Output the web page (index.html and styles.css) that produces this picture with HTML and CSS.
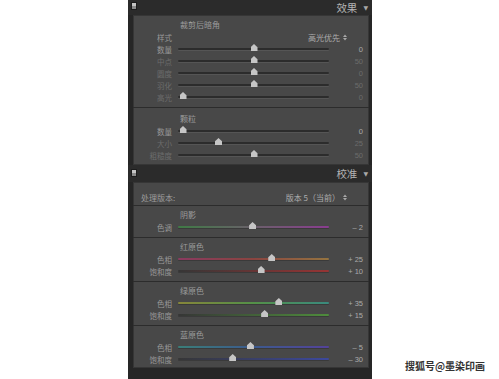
FILE: index.html
```html
<!DOCTYPE html>
<html lang="zh">
<head>
<meta charset="utf-8">
<link rel="stylesheet" href="styles.css">
</head>
<body>
<div class="panel">
  <div class="head head-top">
    <span class="toggle"></span>
    <span class="head-title">效果</span>
    <span class="caret">▼</span>
  </div>
  <div class="content content-a">
    <div class="section sec-vignette">
      <div class="title">裁剪后暗角</div>
      <div class="row">
        <span class="label">样式</span>
        <span class="select">高光优先 <svg class="updown" width="4" height="7" viewBox="0 0 4 7"><polygon points="0,3 2,0.5 4,3" fill="#a8a8a8"/><polygon points="0,4 4,4 2,6.5" fill="#a8a8a8"/></svg></span>
      </div>
      <div class="row">
        <span class="label">数量</span>
        <span class="track"><span class="thumb" style="--p:0.5"></span></span>
        <span class="value">0</span>
      </div>
      <div class="row dim">
        <span class="label">中点</span>
        <span class="track"><span class="thumb" style="--p:0.5"></span></span>
        <span class="value">50</span>
      </div>
      <div class="row dim">
        <span class="label">圆度</span>
        <span class="track"><span class="thumb" style="--p:0.5"></span></span>
        <span class="value">0</span>
      </div>
      <div class="row dim">
        <span class="label">羽化</span>
        <span class="track"><span class="thumb" style="--p:0.5"></span></span>
        <span class="value">50</span>
      </div>
      <div class="row dim">
        <span class="label">高光</span>
        <span class="track"><span class="thumb" style="--p:0"></span></span>
        <span class="value">0</span>
      </div>
    </div>
    <div class="section sec-grain">
      <div class="title">颗粒</div>
      <div class="row">
        <span class="label">数量</span>
        <span class="track"><span class="thumb" style="--p:0"></span></span>
        <span class="value">0</span>
      </div>
      <div class="row dim">
        <span class="label">大小</span>
        <span class="track"><span class="thumb" style="--p:0.25"></span></span>
        <span class="value">25</span>
      </div>
      <div class="row dim">
        <span class="label">粗糙度</span>
        <span class="track"><span class="thumb" style="--p:0.5"></span></span>
        <span class="value">50</span>
      </div>
    </div>
  </div>
  <div class="head head-cal">
    <span class="toggle"></span>
    <span class="head-title">校准</span>
    <span class="caret">▼</span>
  </div>
  <div class="content content-b">
    <div class="section sec-process">
      <div class="process-row">
        <span class="process-label">处理版本:</span>
        <span class="select">版本 5（当前） <svg class="updown" width="4" height="7" viewBox="0 0 4 7"><polygon points="0,3 2,0.5 4,3" fill="#a8a8a8"/><polygon points="0,4 4,4 2,6.5" fill="#a8a8a8"/></svg></span>
      </div>
    </div>
    <div class="section">
      <div class="title">阴影</div>
      <div class="row">
        <span class="label">色调</span>
        <span class="track color g-tint"><span class="thumb" style="--p:0.49"></span></span>
        <span class="value">– 2</span>
      </div>
    </div>
    <div class="section">
      <div class="title">红原色</div>
      <div class="row">
        <span class="label">色相</span>
        <span class="track color g-red-hue"><span class="thumb" style="--p:0.625"></span></span>
        <span class="value">+ 25</span>
      </div>
      <div class="row">
        <span class="label">饱和度</span>
        <span class="track color g-red-sat"><span class="thumb" style="--p:0.55"></span></span>
        <span class="value">+ 10</span>
      </div>
    </div>
    <div class="section">
      <div class="title">绿原色</div>
      <div class="row">
        <span class="label">色相</span>
        <span class="track color g-green-hue"><span class="thumb" style="--p:0.675"></span></span>
        <span class="value">+ 35</span>
      </div>
      <div class="row">
        <span class="label">饱和度</span>
        <span class="track color g-green-sat"><span class="thumb" style="--p:0.575"></span></span>
        <span class="value">+ 15</span>
      </div>
    </div>
    <div class="section sec-last">
      <div class="title">蓝原色</div>
      <div class="row">
        <span class="label">色相</span>
        <span class="track color g-blue-hue"><span class="thumb" style="--p:0.475"></span></span>
        <span class="value">– 5</span>
      </div>
      <div class="row">
        <span class="label">饱和度</span>
        <span class="track color g-blue-sat"><span class="thumb" style="--p:0.35"></span></span>
        <span class="value">– 30</span>
      </div>
    </div>
  </div>
</div>
<div class="watermark">搜狐号@墨染印画</div>
</body>
</html>
```

FILE: styles.css
```css
html, body {
  margin: 0;
  padding: 0;
  background: #ffffff;
}
body {
  width: 499px;
  height: 379px;
  overflow: hidden;
  position: relative;
  font-family: "Noto Sans CJK SC", "Liberation Sans", sans-serif;
}
.panel {
  margin-left: 128px;
  width: 244px;
  height: 379px;
  background: #262626;
  display: flex;
  flex-direction: column;
}
.head {
  display: flex;
  align-items: center;
  padding: 0 3px 0 3px;
  background: #2b2b2b;
}
.head-top { height: 15px; }
.head-cal { height: 17px; }
.toggle {
  width: 4px;
  height: 6px;
  background: linear-gradient(#c4c4c4 0 50%, #8a8a8a 50% 100%);
  border: 1px solid #1c1c1c;
  align-self: flex-start;
  margin-top: 2px;
}
.head-cal .toggle { margin-top: 4px; }
.head-title {
  margin-left: auto;
  color: #b4b4b4;
  font-size: 10.5px;
  line-height: 12px;
}
.caret {
  color: #a9a9a9;
  font-size: 6px;
  margin-left: 6px;
  margin-right: 1px;
  font-family: "DejaVu Sans", sans-serif;
}
.content {
  margin: 0 3px 0 5px;
  background: #484848;
  box-shadow: inset 1px 0 0 #363636, inset -1px 0 0 #363636, inset 0 1px 0 #363636, inset 0 -1px 0 #363636;
}
.content-a { height: 150px; }
.content-b { height: 186px; }
.section {
  padding: 3px 0 4px 0;
  border-bottom: 1px solid #2c2c2c;
}
.sec-vignette { padding: 4px 0 4px 0; }
.sec-grain { padding: 5px 0 3px 0; border-bottom: none; }
.sec-process { padding: 8px 0 1px 0; }
.sec-last { border-bottom: none; padding-bottom: 2px; }
.title {
  height: 12px;
  line-height: 12px;
  font-size: 8px;
  color: #9c9c9c;
  margin-left: 47px;
}
.row {
  height: 12px;
  display: flex;
  align-items: center;
}
.label {
  width: 39px;
  text-align: right;
  font-size: 7.5px;
  color: #989898;
  flex: none;
}
.select {
  margin-left: auto;
  margin-right: 22px;
  font-size: 8px;
  color: #aeaeae;
  display: flex;
  align-items: center;
  gap: 3px;
}
.updown { display: block; }
.track {
  position: relative;
  margin-left: 6px;
  width: 151px;
  height: 2px;
  background: #2c2c2c;
  border-radius: 1px;
  box-shadow: 0 1px 0 #555555;
  flex: none;
}
.track.color { box-shadow: 0 1px 0 #3a3a3a; }
.thumb {
  position: absolute;
  top: -4px;
  left: calc(1.5px + var(--p) * 142px);
  width: 7px;
  height: 7px;
  background: #c6c6c6;
  clip-path: polygon(0 100%, 0 45%, 50% 0, 100% 45%, 100% 100%);
}
.value {
  width: 34px;
  text-align: right;
  font-size: 7.5px;
  color: #aaaaaa;
  font-family: "Liberation Sans", sans-serif;
  flex: none;
}
.dim .label, .dim .value { color: #6c6c6c; }
.process-row {
  height: 14px;
  display: flex;
  align-items: center;
}
.process-label {
  margin-left: 8px;
  font-size: 8px;
  color: #9c9c9c;
}
.g-tint { background: linear-gradient(90deg, #3f7a45, #6a606a 50%, #8a3c90); }
.g-red-hue { background: linear-gradient(90deg, #8a3a60, #8a4440 50%, #957440); }
.g-red-sat { background: linear-gradient(90deg, #363636, #963434); }
.g-green-hue { background: linear-gradient(90deg, #86863a, #549048 50%, #3a8a7e); }
.g-green-sat { background: linear-gradient(90deg, #363636, #4e8c3c); }
.g-blue-hue { background: linear-gradient(90deg, #3a7e78, #3c5a8e 50%, #54429a); }
.g-blue-sat { background: linear-gradient(90deg, #363636, #3c489c); }
.watermark {
  position: absolute;
  left: 405px;
  top: 358px;
  font-size: 10px;
  font-weight: bold;
  color: #333333;
  text-shadow: 0 0 1px #ffffff;
}
```
